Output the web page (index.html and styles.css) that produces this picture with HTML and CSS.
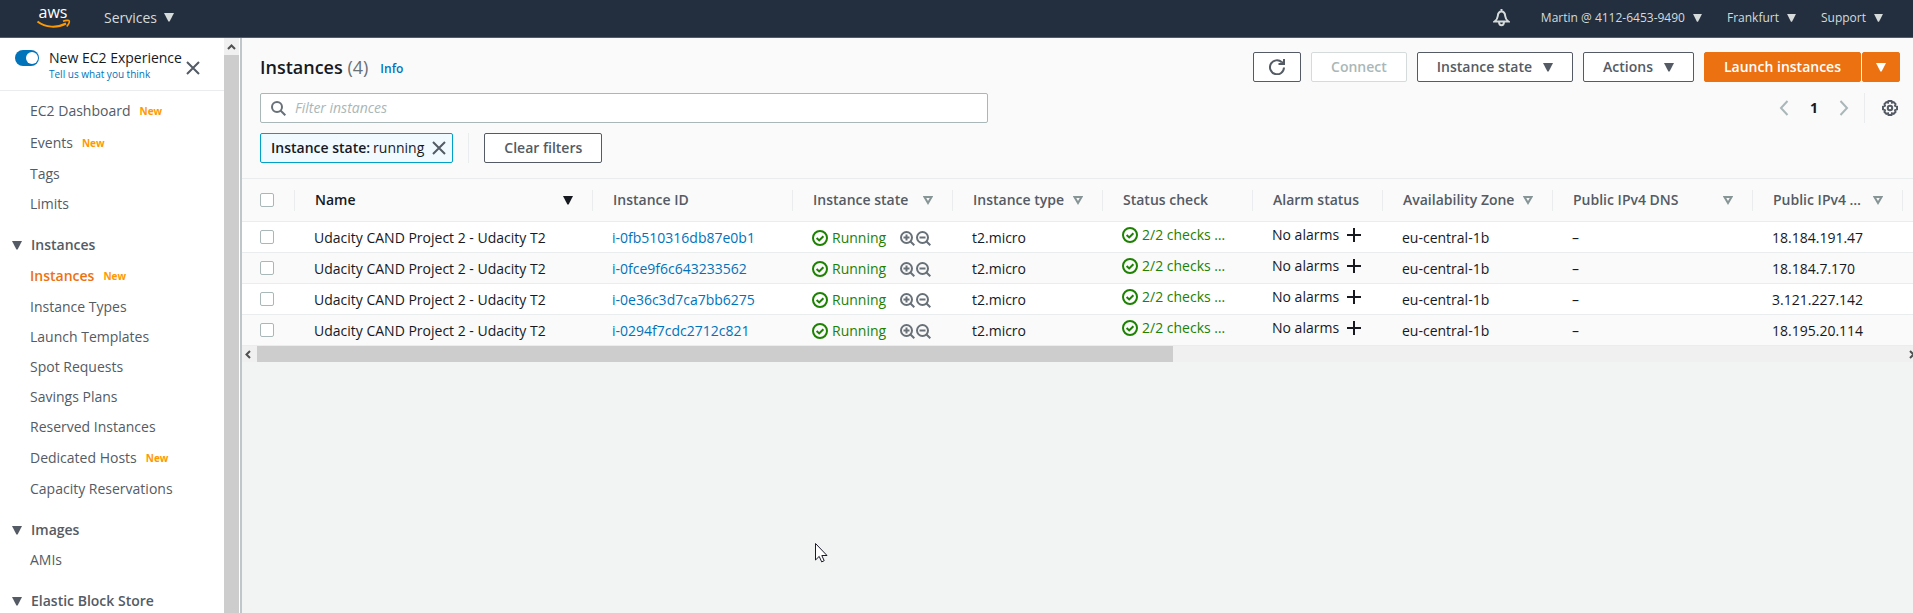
FILE: index.html
```html
<!DOCTYPE html>
<html lang="en">
<head>
<meta charset="utf-8">
<title>Instances | EC2 Management Console</title>
<link rel="stylesheet" href="styles.css">
</head>
<body>
<svg class="defs" aria-hidden="true">
  <symbol id="tri" viewBox="0 0 10 9"><path d="M0 0h10L5.600 8.600h-1.200z" fill="currentColor"/></symbol>
  <symbol id="tri-open" viewBox="0 0 10 9"><path d="M1.500 1h7L5 7z" fill="none" stroke="currentColor" stroke-width="2"/></symbol>
  <symbol id="close" viewBox="0 0 14 14"><path d="M1 1l12 12M13 1L1 13" fill="none" stroke="currentColor" stroke-width="2"/></symbol>
  <symbol id="ok" viewBox="0 0 16 16"><g fill="none" stroke="currentColor" stroke-width="2"><circle cx="8" cy="8" r="7"/><path d="M4.600 8l2.600 2.400 4.200-4.200"/></g></symbol>
  <symbol id="zoom-in" viewBox="0 0 15 15"><g fill="none" stroke="currentColor" stroke-width="2"><circle cx="6.500" cy="6.500" r="5.500"/><path d="M10.500 10.500L14.300 14.300M3.500 6.500h6M6.500 3.500v6"/></g></symbol>
  <symbol id="zoom-out" viewBox="0 0 15 15"><g fill="none" stroke="currentColor" stroke-width="2"><circle cx="6.500" cy="6.500" r="5.500"/><path d="M10.500 10.500L14.300 14.300M3.500 6.500h6"/></g></symbol>
  <symbol id="plus" viewBox="0 0 14 14"><path d="M7 0v14M0 7h14" stroke="currentColor" stroke-width="2"/></symbol>
</svg>

<header class="topbar">
  <a class="logo" href="#" aria-label="AWS home">
    <svg width="36" height="34" viewBox="0 0 36 34">
      <text class="logo-text" x="17" y="17" text-anchor="middle">aws</text>
      <path d="M1.500 20.500c8 6.500 20 6.500 28.500 2" fill="none" stroke="#f90" stroke-width="2"/>
      <path d="M27 20.200c3-1.200 6-1 6.300-.2s-.6 3.600-2.600 5.500" fill="none" stroke="#f90" stroke-width="1.600"/>
    </svg>
  </a>
  <button class="nav-item services">Services <svg class="tri"><use href="#tri"/></svg></button>
  <nav class="nav-right">
    <button class="nav-item bell" aria-label="Notifications">
      <svg width="17" height="18" viewBox="0 0 17 18"><path d="M8.500 0v2M1.600 12.500c2-1.500 3-3 3.200-5.500.2-3 1.600-4.600 3.700-4.600s3.500 1.600 3.700 4.600c.2 2.500 1.200 4 3.200 5.500zM6 13c.2 4.400 4.800 4.400 5 0" fill="none" stroke="currentColor" stroke-width="2"/></svg>
    </button>
    <button class="nav-item small">Martin @ 4112-6453-9490 <svg class="tri"><use href="#tri"/></svg></button>
    <button class="nav-item small">Frankfurt <svg class="tri"><use href="#tri"/></svg></button>
    <button class="nav-item small">Support <svg class="tri"><use href="#tri"/></svg></button>
  </nav>
</header>

<div class="layout">
  <aside class="sidebar">
    <div class="side-content">
      <div class="experience">
        <label class="switch"><input type="checkbox" checked aria-label="New EC2 Experience"><span class="knob"></span></label>
        <div class="exp-text">
          <span class="exp-title">New EC2 Experience</span>
          <a href="#">Tell us what you think</a>
        </div>
        <button class="icon-btn side-close" aria-label="Close"><svg width="14" height="14"><use href="#close"/></svg></button>
      </div>
      <nav class="side-nav">
        <ul>
          <li class="has-new"><a href="#">EC2 Dashboard</a><span class="new">New</span></li>
          <li class="has-new"><a href="#">Events</a><span class="new">New</span></li>
          <li><a href="#">Tags</a></li>
          <li><a href="#">Limits</a></li>
        </ul>
        <h2><svg class="tri"><use href="#tri"/></svg>Instances</h2>
        <ul>
          <li class="has-new active"><a href="#">Instances</a><span class="new">New</span></li>
          <li><a href="#">Instance Types</a></li>
          <li><a href="#">Launch Templates</a></li>
          <li><a href="#">Spot Requests</a></li>
          <li><a href="#">Savings Plans</a></li>
          <li><a href="#">Reserved Instances</a></li>
          <li class="has-new"><a href="#">Dedicated Hosts</a><span class="new">New</span></li>
          <li><a href="#">Capacity Reservations</a></li>
        </ul>
        <h2><svg class="tri"><use href="#tri"/></svg>Images</h2>
        <ul><li><a href="#">AMIs</a></li></ul>
        <h2><svg class="tri"><use href="#tri"/></svg>Elastic Block Store</h2>
      </nav>
    </div>
    <div class="vscroll">
      <div class="vscroll-arrow"><svg width="9" height="6" viewBox="0 0 9 6"><path d="M1 5l3.500-3.500L8 5" fill="none" stroke="#505050" stroke-width="2"/></svg></div>
      <div class="vscroll-thumb"></div>
    </div>
  </aside>

  <main class="main">
    <section class="panel-head">
      <div class="title-row">
        <h1>Instances <span class="count">(4)</span></h1>
        <a class="info" href="#">Info</a>
        <div class="actions">
          <button class="btn btn-refresh" aria-label="Refresh"><svg width="16" height="16" viewBox="0 0 16 16"><path d="M15 8.500A7 7 0 1 1 12.800 3.200M15 0v5H9.500" fill="none" stroke="currentColor" stroke-width="2"/><path d="M11 5l4-4v4z" fill="currentColor"/></svg></button>
          <button class="btn" disabled>Connect</button>
          <button class="btn">Instance state <svg class="tri"><use href="#tri"/></svg></button>
          <button class="btn">Actions <svg class="tri"><use href="#tri"/></svg></button>
          <div class="split">
            <button class="btn primary">Launch instances</button>
            <button class="btn primary more" aria-label="More launch options"><svg class="tri"><use href="#tri"/></svg></button>
          </div>
        </div>
      </div>
      <div class="filter-row">
        <label class="search">
          <svg width="15" height="15" viewBox="0 0 15 15"><g fill="none" stroke="currentColor" stroke-width="2"><circle cx="6" cy="6" r="5"/><path d="M9.500 9.500l4.800 4.800"/></g></svg>
          <input type="text" placeholder="Filter instances" aria-label="Filter instances">
        </label>
        <div class="pager">
          <button class="icon-btn muted" aria-label="Previous page"><svg width="10" height="16" viewBox="0 0 10 16"><path d="M8.500 1L2 8l6.500 7" fill="none" stroke="currentColor" stroke-width="2"/></svg></button>
          <span class="page">1</span>
          <button class="icon-btn muted" aria-label="Next page"><svg width="10" height="16" viewBox="0 0 10 16"><path d="M1.500 1L8 8l-6.500 7" fill="none" stroke="currentColor" stroke-width="2"/></svg></button>
          <span class="divider"></span>
          <button class="icon-btn gear" aria-label="Preferences"><svg width="16" height="16" viewBox="0 0 16 16"><g fill="none" stroke="currentColor" stroke-width="2"><path d="M6.500 1h3l.5 1.700 1.700-.6 1.800 1.900-.5 1.800 2 .9v2.600l-2 .9.500 1.800-1.800 1.900-1.700-.6-.5 1.700h-3l-.5-1.700-1.700.6L2.500 12l.5-1.800-2-.9V6.700l2-.9L2.500 4l1.800-1.900 1.700.6z"/><circle cx="8" cy="8" r="2.200"/></g></svg></button>
        </div>
      </div>
      <div class="chips">
        <div class="chip"><b>Instance state:</b> running <button class="icon-btn" aria-label="Remove filter"><svg width="14" height="14"><use href="#close"/></svg></button></div>
        <span class="divider"></span>
        <button class="btn">Clear filters</button>
      </div>
    </section>

    <div class="table-wrap">
      <table>
        <colgroup><col class="w-check"><col class="w-name"><col class="w-200"><col class="w-160"><col class="w-150"><col class="w-150"><col class="w-130"><col class="w-170"><col class="w-200"><col class="w-150"><col></colgroup>
        <thead>
          <tr>
            <th><div class="th"><input type="checkbox" aria-label="Select all"></div></th>
            <th class="sorted"><div class="th">Name<svg class="tri"><use href="#tri"/></svg></div></th>
            <th><div class="th">Instance ID</div></th>
            <th><div class="th">Instance state<svg class="tri"><use href="#tri-open"/></svg></div></th>
            <th><div class="th">Instance type<svg class="tri"><use href="#tri-open"/></svg></div></th>
            <th><div class="th">Status check</div></th>
            <th><div class="th">Alarm status</div></th>
            <th><div class="th">Availability Zone<svg class="tri"><use href="#tri-open"/></svg></div></th>
            <th><div class="th">Public IPv4 DNS<svg class="tri"><use href="#tri-open"/></svg></div></th>
            <th><div class="th">Public IPv4 …<svg class="tri"><use href="#tri-open"/></svg></div></th>
            <th></th>
          </tr>
        </thead>
        <tbody>
          <tr>
            <td><input type="checkbox" aria-label="Select i-0fb510316db87e0b1"></td>
            <td>Udacity CAND Project 2 - Udacity T2</td>
            <td><a href="#">i-0fb510316db87e0b1</a></td>
            <td><div class="cell ok"><svg class="i16"><use href="#ok"/></svg>Running<span class="zooms"><svg class="i15"><use href="#zoom-in"/></svg><svg class="i15"><use href="#zoom-out"/></svg></span></div></td>
            <td>t2.micro</td>
            <td class="raised"><div class="cell ok"><svg class="i16"><use href="#ok"/></svg>2/2 checks …</div></td>
            <td class="raised"><div class="cell alarm">No alarms<svg class="i14"><use href="#plus"/></svg></div></td>
            <td>eu-central-1b</td><td>–</td><td>18.184.191.47</td><td></td>
          </tr>
          <tr>
            <td><input type="checkbox" aria-label="Select i-0fce9f6c643233562"></td>
            <td>Udacity CAND Project 2 - Udacity T2</td>
            <td><a href="#">i-0fce9f6c643233562</a></td>
            <td><div class="cell ok"><svg class="i16"><use href="#ok"/></svg>Running<span class="zooms"><svg class="i15"><use href="#zoom-in"/></svg><svg class="i15"><use href="#zoom-out"/></svg></span></div></td>
            <td>t2.micro</td>
            <td class="raised"><div class="cell ok"><svg class="i16"><use href="#ok"/></svg>2/2 checks …</div></td>
            <td class="raised"><div class="cell alarm">No alarms<svg class="i14"><use href="#plus"/></svg></div></td>
            <td>eu-central-1b</td><td>–</td><td>18.184.7.170</td><td></td>
          </tr>
          <tr>
            <td><input type="checkbox" aria-label="Select i-0e36c3d7ca7bb6275"></td>
            <td>Udacity CAND Project 2 - Udacity T2</td>
            <td><a href="#">i-0e36c3d7ca7bb6275</a></td>
            <td><div class="cell ok"><svg class="i16"><use href="#ok"/></svg>Running<span class="zooms"><svg class="i15"><use href="#zoom-in"/></svg><svg class="i15"><use href="#zoom-out"/></svg></span></div></td>
            <td>t2.micro</td>
            <td class="raised"><div class="cell ok"><svg class="i16"><use href="#ok"/></svg>2/2 checks …</div></td>
            <td class="raised"><div class="cell alarm">No alarms<svg class="i14"><use href="#plus"/></svg></div></td>
            <td>eu-central-1b</td><td>–</td><td>3.121.227.142</td><td></td>
          </tr>
          <tr>
            <td><input type="checkbox" aria-label="Select i-0294f7cdc2712c821"></td>
            <td>Udacity CAND Project 2 - Udacity T2</td>
            <td><a href="#">i-0294f7cdc2712c821</a></td>
            <td><div class="cell ok"><svg class="i16"><use href="#ok"/></svg>Running<span class="zooms"><svg class="i15"><use href="#zoom-in"/></svg><svg class="i15"><use href="#zoom-out"/></svg></span></div></td>
            <td>t2.micro</td>
            <td class="raised"><div class="cell ok"><svg class="i16"><use href="#ok"/></svg>2/2 checks …</div></td>
            <td class="raised"><div class="cell alarm">No alarms<svg class="i14"><use href="#plus"/></svg></div></td>
            <td>eu-central-1b</td><td>–</td><td>18.195.20.114</td><td></td>
          </tr>
        </tbody>
      </table>
    </div>
    <div class="hscroll">
      <svg class="harrow" width="6" height="9" viewBox="0 0 6 9"><path d="M5 1L1.500 4.500 5 8" fill="none" stroke="#505050" stroke-width="2"/></svg>
      <div class="hscroll-thumb"></div>
      <svg class="harrow end" width="6" height="9" viewBox="0 0 6 9"><path d="M1 1l3.500 3.500L1 8" fill="none" stroke="#505050" stroke-width="2"/></svg>
    </div>
  </main>
</div>
<svg class="cursor" width="13" height="20" viewBox="0 0 13 20"><path d="M.5.500v16.500l3.700-3.600 2.500 5.500 2.500-1.200-2.400-5.200h5.200z" fill="#fff" stroke="#1a1a2a"/></svg>
</body>
</html>
```
FILE: styles.css
```css
* { box-sizing: border-box; }
html, body { height: 100%; }
body {
  margin: 0;
  display: flex;
  flex-direction: column;
  overflow: hidden;
  background: #f2f3f3;
  color: #16191f;
  font: 14px/20px "Open Sans", "Noto Sans", sans-serif;
}
button, input { font: inherit; color: inherit; }
button { background: none; border: 0; padding: 0; white-space: nowrap; }
a { color: #0073bb; text-decoration: none; }
b { font-weight: 600; }
ul { list-style: none; margin: 0; padding: 0; }
svg { display: block; flex: none; }
.defs { position: absolute; width: 0; height: 0; }
.tri { width: 10px; height: 9px; }

/* top bar */
.topbar {
  display: flex;
  flex: none;
  align-items: center;
  height: 38px;
  padding: 0 30px 2px 36px;
  background: #232f3e;
  border-bottom: 1px solid #545b64;
  color: #d5dbdb;
}
.logo-text { font: 400 16px "Open Sans", sans-serif; fill: #fff; }
.nav-item { display: flex; align-items: center; gap: 8px; }
.services { margin-left: 32px; gap: 7px; }
.nav-right { display: flex; align-items: center; gap: 25px; margin-left: auto; }
.nav-right .bell { margin-right: 6px; }
.small { font-size: 12px; }
.small .tri { width: 9px; height: 8px; }

.layout { display: flex; flex: 1; min-height: 0; }

/* sidebar */
.sidebar { display: flex; flex: none; width: 242px; background: #fff; border-right: 2px solid #bfc7cb; overflow: hidden; }
.side-content { flex: 1; }
.experience { display: flex; height: 53px; padding: 12px 24px 0 15px; border-bottom: 1px solid #eaeded; }
.switch { flex: none; width: 24px; height: 16px; border-radius: 8px; background: #0073bb; padding: 2px; }
.switch input { position: absolute; opacity: 0; margin: 0; }
.knob { display: block; width: 12px; height: 12px; margin-left: 9px; border-radius: 50%; background: #fff; }
.exp-text { display: flex; flex-direction: column; margin-left: 10px; white-space: nowrap; }
.exp-title { line-height: 16px; }
.exp-text a { font-size: 10px; line-height: 16px; }
.side-close { margin-left: auto; align-self: flex-start; padding-top: 11px; color: #545b64; }
.side-nav { padding-top: 4px; color: #545b64; }
.side-nav li { display: flex; align-items: center; height: 30px; padding-left: 30px; white-space: nowrap; }
.side-nav li.has-new { height: 32px; }
.side-nav li a { color: inherit; }
.side-nav .active a { color: #ec7211; font-weight: 600; }
.new { margin-left: 9px; font-size: 10px; font-weight: 700; color: #f90; }
.side-nav h2 { display: flex; align-items: center; gap: 9px; height: 30px; margin: 11px 0 0; padding-left: 12px; font-size: 14px; font-weight: 600; }
.vscroll { width: 16px; background: #f0f0f0; border-right: 1px solid #fff; }
.vscroll-arrow { height: 17px; display: flex; align-items: center; justify-content: center; }
.vscroll-thumb { height: 100%; background: #cdcdcd; }

/* panel header */
.main { flex: 1; min-width: 0; overflow: hidden; }
.panel-head { display: flex; flex-direction: column; padding: 14px 13px 15px 18px; background: #fafafa; border-bottom: 1px solid #eaeded; }
.title-row, .actions, .filter-row, .chips, .pager { display: flex; align-items: center; }
h1 { margin: 0; font-size: 18px; font-weight: 600; line-height: 30px; white-space: nowrap; }
.count { font-weight: 400; color: #687078; }
.info { margin-left: 12px; padding-top: 3px; font-size: 12px; font-weight: 600; }
.actions { margin-left: auto; gap: 10px; }
.btn {
  display: flex;
  align-items: center;
  justify-content: center;
  gap: 11px;
  height: 30px;
  padding: 0 19px;
  border: 1px solid #545b64;
  border-radius: 2px;
  background: #fff;
  color: #545b64;
  font-weight: 600;
}
.btn:disabled { border-color: #d5dbdb; color: #aab7b8; }
.btn-refresh { padding: 0 15px; }
.split { display: flex; gap: 1px; }
.primary { background: #ec7211; border-color: #ec7211; color: #fff; }
.primary.more { padding: 0 13px; }
.filter-row { margin-top: 11px; }
.search {
  display: flex;
  align-items: center;
  gap: 9px;
  width: 44.4%;
  height: 30px;
  padding: 0 10px;
  border: 1px solid #aab7b8;
  border-radius: 2px;
  background: #fff;
  color: #687078;
}
.search input { flex: 1; border: 0; outline: 0; padding: 0; background: none; }
.search input::placeholder { color: #aab7b8; font-style: italic; }
.pager { margin-left: auto; }
.muted { color: #aab7b8; }
.page { width: 50px; text-align: center; font-weight: 700; }
.divider { width: 1px; height: 30px; margin: 0 15px; background: #eaeded; }
.pager .divider { margin: 0 17px 0 15px; }
.gear { color: #545b64; padding-right: 2px; }
.chips { margin-top: 10px; }
.chip { display: flex; align-items: center; height: 30px; padding: 0 6px 0 10px; gap: 3px; border: 1px solid #00a1c9; border-radius: 2px; background: #f1faff; }
.chip .icon-btn { margin-left: 5px; color: #545b64; }

/* table */
.table-wrap { overflow: hidden; background: #fff; }
table { width: 100%; table-layout: fixed; border-collapse: separate; border-spacing: 0; }
.w-check { width: 53px; }
.w-name { width: 298px; }
.w-200 { width: 200px; }
.w-170 { width: 170px; }
.w-160 { width: 160px; }
.w-150 { width: 150px; }
.w-130 { width: 130px; }
th { height: 43px; padding: 0; text-align: left; font-weight: 600; background: #fafafa; border-bottom: 1px solid #eaeded; color: #545b64; }
.th { display: flex; align-items: center; justify-content: space-between; height: 21px; padding: 0 19px 0 20px; border-right: 1px solid #eaeded; white-space: nowrap; }
.th .tri { color: #879596; }
.sorted, .sorted .tri { color: #16191f; }
th:first-child .th { padding-left: 18px; }
td { height: 31px; padding: 2px 0 0 19px; border-bottom: 1px solid #eaeded; white-space: nowrap; }
td:first-child { padding: 0 0 0 18px; }
td.raised { padding: 0 0 4px 19px; }
tbody tr:nth-child(even) { background: #fafafa; }
table input { appearance: none; display: block; width: 14px; height: 14px; margin: 0; border: 1px solid #aab7b8; border-radius: 2px; background: #fff; }
.cell { display: flex; align-items: center; gap: 4px; }
.ok { color: #1d8102; }
.alarm { gap: 8px; }
.zooms { display: flex; gap: 1px; margin-left: auto; padding-right: 22px; color: #687078; }
.i14 { width: 14px; height: 14px; }
.i15 { width: 15px; height: 15px; }
.i16 { width: 16px; height: 16px; }

.hscroll { display: flex; align-items: center; height: 16px; background: #f0f0f0; overflow: hidden; }
.harrow { margin: 0 6px 0 3px; }
.hscroll-thumb { width: 54.8%; height: 100%; background: #cdcdcd; }
.harrow.end { margin: 0 -2px 0 auto; }

.cursor { position: absolute; left: 815px; top: 543px; }
```
